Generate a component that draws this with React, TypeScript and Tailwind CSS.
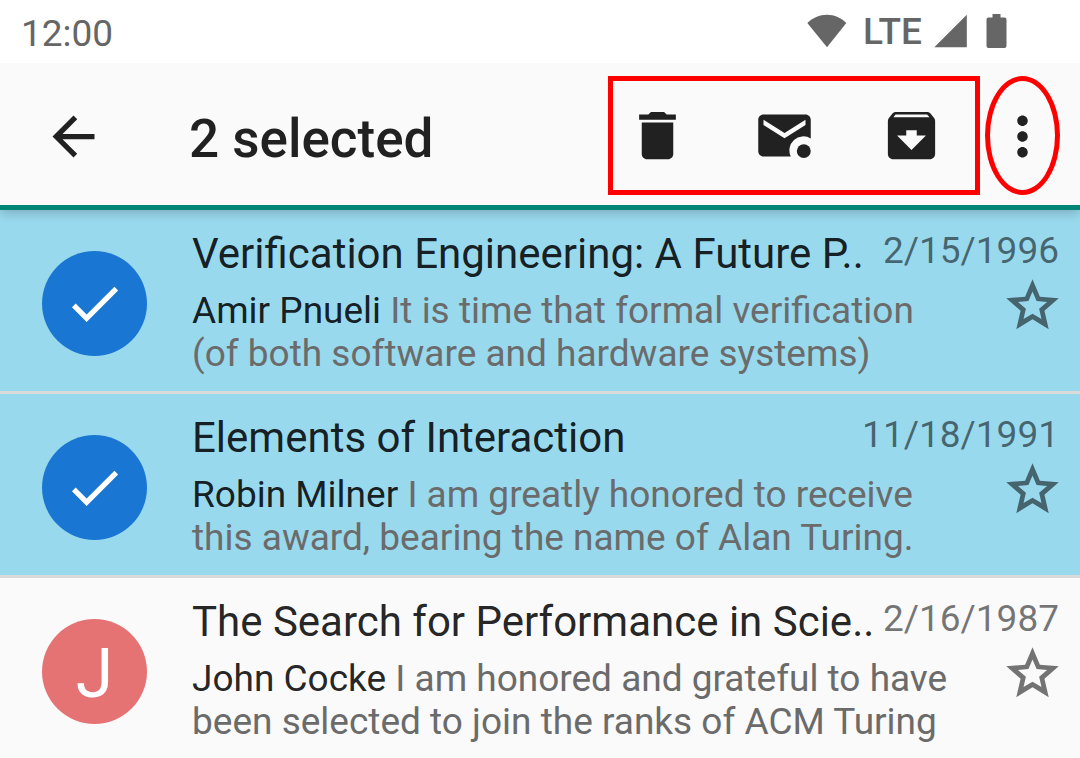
import { useState } from "react";
import type { ReactNode } from "react";

type Mail = {
  id: number;
  subject: string;
  sender: string;
  snippet: string;
  date: string;
  selected: boolean;
};

const initialMails: Mail[] = [
  {
    id: 1,
    subject: "Verification Engineering: A Future P..",
    sender: "Amir Pnueli",
    snippet: "It is time that formal verification (of both software and hardware systems)",
    date: "2/15/1996",
    selected: true,
  },
  {
    id: 2,
    subject: "Elements of Interaction",
    sender: "Robin Milner",
    snippet: "I am greatly honored to receive this award, bearing the name of Alan Turing.",
    date: "11/18/1991",
    selected: true,
  },
  {
    id: 3,
    subject: "The Search for Performance in Scie..",
    sender: "John Cocke",
    snippet: "I am honored and grateful to have been selected to join the ranks of ACM Turing",
    date: "2/16/1987",
    selected: false,
  },
];

function Icon({ d }: { d: string }) {
  return (
    <svg viewBox="0 0 24 24" className="size-[63px] fill-current" aria-hidden="true">
      <path d={d} />
    </svg>
  );
}

function IconButton({ label, children }: { label: string; children: ReactNode }) {
  return (
    <button type="button" aria-label={label} className="shrink-0">
      {children}
    </button>
  );
}

function StatusBar() {
  return (
    <div className="relative z-20 flex h-[63px] shrink-0 items-center bg-white pr-[73px] pl-[21px] text-[37px] leading-[43px] text-[#666666]">
      <span className="mt-1 flex-1">12:00</span>
      <svg viewBox="0 0 40 34" className="mb-[2px] h-[34px] w-10 fill-current" aria-hidden="true">
        <path d="M0.3 9C5.5 4 12.5 0.8 20 0.8S34.300 4 39.300 9L20 33.300z" />
      </svg>
      <span className="ml-4 font-medium">LTE</span>
      <svg viewBox="0 0 33 34" className="mb-[2px] ml-3 h-[34px] w-[33px] fill-current" aria-hidden="true">
        <path d="M32.800 0.800V33.300H0.300z" />
      </svg>
      <svg viewBox="0 0 21 34" className="mb-[2px] ml-[19px] h-[34px] w-[21px] fill-current" aria-hidden="true">
        <path d="M6.500 0H14.500V3.500H18.500Q20.500 3.500 20.500 5.500V32Q20.500 34 18.500 34H2.500Q0.500 34 0.500 32V5.500Q0.500 3.500 2.500 3.500H6.500z" />
      </svg>
    </div>
  );
}

function ActionBar({ count }: { count: number }) {
  return (
    <header className="relative z-10 flex shrink-0 items-center border-b-[5px] border-[#008577] bg-[#fafafa] pt-[13px] pr-5 pb-[10px] pl-[42px] text-[#212121] shadow-[0_3px_10px_rgba(0,0,0,0.2)]">
      <div className="mt-[2px] flex flex-1 items-center">
        <IconButton label="Back">
          <Icon d="M20 11H7.830l5.590-5.590L12 4l-8 8 8 8 1.410-1.410L7.830 13H20v-2z" />
        </IconButton>
        <h1 className="ml-[84px] pt-1 text-[53px] leading-[62px] font-medium">{count} selected</h1>
      </div>
      <div className="flex h-[119px] items-center gap-16 border-[5px] border-[#ff0000] pr-8 pl-[13px]">
        <IconButton label="Delete">
          <Icon d="M6 19c0 1.100.9 2 2 2h8c1.100 0 2-.9 2-2V7H6v12zM19 4h-3.500l-1-1h-5l-1 1H5v2h14V4z" />
        </IconButton>
        <IconButton label="Mark as unread">
          <svg viewBox="0 0 24 24" className="size-[63px] fill-current" aria-hidden="true">
            <path d="M20 4H4c-1.100 0-2 .9-2 2v12c0 1.100.9 2 2 2h10.400A5.350 5.350 0 0 1 22 13.100V6c0-1.100-.9-2-2-2zm0 4l-8 5-8-5V6l8 5 8-5v2z" />
            <circle cx="19.350" cy="17.950" r="2.650" />
          </svg>
        </IconButton>
        <IconButton label="Archive">
          <Icon d="M20.540 5.230l-1.390-1.680C18.880 3.210 18.470 3 18 3H6c-.47 0-.88.21-1.160.55L3.460 5.230C3.170 5.570 3 6.020 3 6.500V19c0 1.100.9 2 2 2h14c1.100 0 2-.9 2-2V6.500c0-.48-.17-.93-.46-1.270zM12 17.500L6.500 12H10v-2h4v2h3.500L12 17.500zM5.120 5l.81-1h12l.94 1H5.120z" />
        </IconButton>
      </div>
      <div className="ml-[5px] flex h-[119px] w-[75px] items-center justify-center rounded-[50%] border-[5px] border-[#ff0000] pt-[2px]">
        <IconButton label="More options">
          <Icon d="M12 8c1.100 0 2-.9 2-2s-.9-2-2-2-2 .9-2 2 .9 2 2 2zm0 2c-1.100 0-2 .9-2 2s.9 2 2 2 2-.9 2-2-.9-2-2-2zm0 6c-1.100 0-2 .9-2 2s.9 2 2 2 2-.9 2-2-.9-2-2-2z" />
        </IconButton>
      </div>
    </header>
  );
}

function MailRow({ mail, onToggle }: { mail: Mail; onToggle: () => void }) {
  return (
    <li
      className={`flex items-start border-b-[3px] border-[#dadada] pt-[19px] pr-[21px] pb-4 pl-[42px] ${
        mail.selected ? "bg-[#99d9ed]" : "bg-[#fafafa]"
      }`}
    >
      <button
        type="button"
        aria-pressed={mail.selected}
        aria-label={`Select ${mail.subject}`}
        onClick={onToggle}
        className={`mt-[22px] flex size-[105px] shrink-0 items-center justify-center rounded-full text-[68px] leading-none text-white ${
          mail.selected ? "bg-[#1976d2]" : "bg-[#e57373] pt-1"
        }`}
      >
        {mail.selected ? <Icon d="M9 16.170L4.830 12l-1.420 1.410L9 19 21 7l-1.410-1.410z" /> : mail.sender[0]}
      </button>
      <div className="ml-[45px] min-w-0 flex-1">
        <div className="flex items-start justify-between">
          <h2 className="truncate text-[42px] leading-[49px] text-black/87">{mail.subject}</h2>
          <time className="shrink-0 text-[37px] leading-[43px] text-black/54">{mail.date}</time>
        </div>
        <div className="mt-[11px] flex items-start justify-between">
          <p className="mr-10 text-[37px] leading-[43px] text-[#6b6b6b]">
            <span className="text-black/87">{mail.sender}</span> {mail.snippet}
          </p>
          <div className="-mt-[15px] -mr-[5px] flex text-black/54">
            <IconButton label={`Star ${mail.subject}`}>
              <Icon d="M22 9.240l-7.190-.62L12 2 9.190 8.630 2 9.240l5.460 4.730L5.820 21 12 17.270 18.180 21l-1.630-7.030L22 9.240zM12 15.100l-3.420 2.070.91-3.900-3.020-2.620 3.990-.35L12 6.620l1.560 3.680 3.990.35-3.020 2.620.91 3.900L12 15.100z" />
            </IconButton>
          </div>
        </div>
      </div>
    </li>
  );
}

export default function App() {
  const [mails, setMails] = useState(initialMails);
  const toggle = (id: number) =>
    setMails((all) => all.map((m) => (m.id === id ? { ...m, selected: !m.selected } : m)));

  return (
    <div className="flex h-screen flex-col overflow-hidden bg-[#fafafa] font-[Roboto,sans-serif]">
      <StatusBar />
      <ActionBar count={mails.filter((m) => m.selected).length} />
      <ul className="min-h-0 flex-1 overflow-hidden">
        {mails.map((mail) => (
          <MailRow key={mail.id} mail={mail} onToggle={() => toggle(mail.id)} />
        ))}
      </ul>
    </div>
  );
}
